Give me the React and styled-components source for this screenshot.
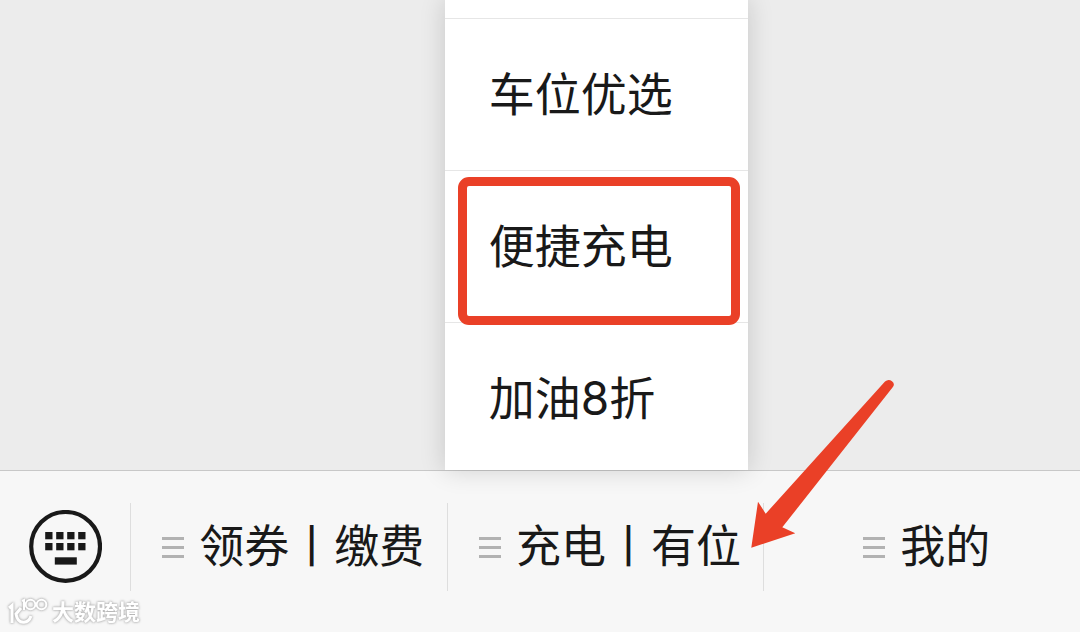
import React, {Component} from 'react'
import styled, {createGlobalStyle} from 'styled-components'

const GlobalStyle = createGlobalStyle`
  * {
    box-sizing: border-box;
  }

  body {
    margin: 0;
    background: #ececec;
    color: #191919;
    font-family: Inter, "Noto Sans CJK SC", sans-serif;
  }
`

const Page = styled.div`
  display: flex;
  flex-direction: column;
  min-height: 100vh;
  overflow: hidden;
`

const Chat = styled.main`
  flex: 1;
`

const Bar = styled.nav`
  position: relative;
  display: flex;
  border-top: 1px solid #c8c8c8;
  background: #f7f7f7;
`

const Cell = styled.div`
  position: relative;
  display: flex;
  flex: 1;
  padding: 32px 0 41px;
`

const KeyboardButton = styled.button`
  display: flex;
  align-items: center;
  justify-content: center;
  width: 130px;
  margin: 32px 0 41px;
  padding: 0;
  border: 0;
  background: none;
`

const MenuButton = styled.button`
  display: flex;
  flex: 1;
  align-items: center;
  justify-content: center;
  gap: 15px;
  height: 88px;
  padding: 0 0 0 9px;
  border: 0;
  border-left: 1px solid #dedede;
  background: none;
  color: inherit;
  font-family: inherit;
  font-size: 45px;
  line-height: 88px;
  white-space: nowrap;
`

const Lines = styled.span`
  width: 22px;
  height: 21px;
  border-top: 3px solid #b2b2b2;
  border-bottom: 3px solid #b2b2b2;
  background: linear-gradient(#b2b2b2, #b2b2b2) center / 100% 3px no-repeat;
`

const Popup = styled.div`
  position: absolute;
  bottom: calc(100% + 1px);
  left: -2px;
  width: 303px;
  padding-top: 18px;
  background: #fff;
  box-shadow: 0 0 24px rgba(0, 0, 0, 0.16);
`

const PopupItem = styled.button`
  position: relative;
  display: block;
  width: 100%;
  height: 152px;
  padding: 0 0 0 44px;
  border: 0;
  border-top: 1px solid #e6e6e6;
  background: none;
  color: inherit;
  font-family: inherit;
  font-size: 46px;
  line-height: 151px;
  text-align: left;
  white-space: nowrap;

  &:last-child {
    height: 148px;
  }

  &::after {
    content: '';
    display: ${props => props.$marked ? 'block' : 'none'};
    position: absolute;
    z-index: 1;
    top: 6px;
    right: 8px;
    bottom: -3px;
    left: 13px;
    border: 9px solid #ea4027;
    border-radius: 11px;
  }
`

const Arrow = styled.svg`
  position: absolute;
  z-index: 2;
  bottom: 83px;
  left: 303px;
`

const Watermark = styled.div`
  position: absolute;
  bottom: 4px;
  left: 8px;
  display: flex;
  align-items: center;
  gap: 4px;
  color: #fff;
  font-size: 22px;
  font-weight: 700;
  line-height: 32px;
  filter: drop-shadow(0 0 1px #aaa) drop-shadow(0 0 1px #ccc);
`

const columns = [
  { label: '领券丨缴费' },
  {
    label: '充电丨有位',
    items: [
      { label: '车位优选' },
      { label: '便捷充电', marked: true },
      { label: '加油8折' },
    ],
  },
  { label: '我的' },
]

const KeyboardIcon = () => (
  <svg width="74" height="74" viewBox="0 0 74 74" fill="#191919">
    <circle cx="37.6" cy="36.4" r="34.4" fill="none" stroke="#191919" strokeWidth="4.2" />
    {[17.2, 28.2, 39.2, 50.2].map(x => (
      <React.Fragment key={x}>
        <rect x={x} y="22" width="7.3" height="7.3" />
        <rect x={x} y="33" width="7.3" height="7.3" />
      </React.Fragment>
    ))}
    <rect x="26.8" y="47.3" width="22" height="7.3" />
  </svg>
)

const Logo = () => (
  <svg width="40" height="32" viewBox="0 0 40 32" fill="none" stroke="#fff" strokeWidth="3">
    <path d="M1 12 4 9.5V27" />
    <path d="M13 12 8 18C9 24 12 26.5 16 26.2 20 26 22 23 23 20" />
    <path d="M14 5 16 4V14" strokeWidth="2" />
    <circle cx="22.500" cy="8.500" r="4.800" strokeWidth="2" />
    <circle cx="33.500" cy="8.500" r="4.800" strokeWidth="2" />
  </svg>
)

class App extends Component {
  renderPopup(items) {
    return (
      <Popup>
        {items.map(item => (
          <PopupItem key={item.label} $marked={item.marked}>{item.label}</PopupItem>
        ))}
      </Popup>
    )
  }

  render() {
    return (
      <Page>
        <GlobalStyle />
        <Chat />
        <Bar>
          <KeyboardButton aria-label="键盘">
            <KeyboardIcon />
          </KeyboardButton>
          {columns.map(column => (
            <Cell key={column.label}>
              <MenuButton>
                <Lines />
                {column.label}
              </MenuButton>
              {column.items && this.renderPopup(column.items)}
              {column.items && (
                <Arrow width="146" height="170" viewBox="0 0 146 170" fill="#ea4027">
                  <path d="M1.3 168.7 8 122.7 15.7 134.7 135 2.5Q138.5-.5 142 2.2 145.5 5 142.5 8.5L32.3 148.3 45.3 154.3Z" />
                </Arrow>
              )}
            </Cell>
          ))}
          <Watermark>
            <Logo />
            大数跨境
          </Watermark>
        </Bar>
      </Page>
    )
  }
}

export default App
